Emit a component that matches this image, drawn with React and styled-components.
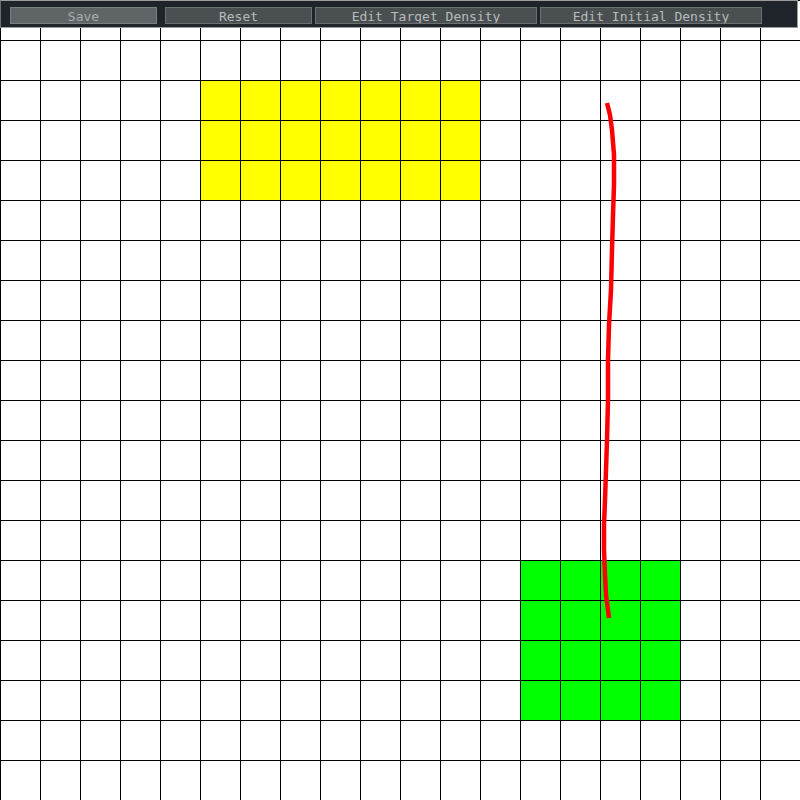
import React from "react";
import styled, { createGlobalStyle } from "styled-components";

const Global = createGlobalStyle`
  html, body { margin: 0; padding: 0; background: #ffffff; }
  body { width: 800px; height: 800px; overflow: hidden; }
`;

const Stage = styled.div`
  position: relative;
  width: 800px;
  height: 800px;
  background: #ffffff;
`;

const Canvas = styled.svg`
  display: block;
  width: 800px;
  height: 800px;
`;

const Toolbar = styled.div`
  position: absolute;
  left: 0;
  top: 0;
  width: 798px;
  height: 28px;
  box-sizing: border-box;
  background: #1f242b;
  border: 1px solid #9c9c9c;
  border-left-color: #6e6e6e;
  display: flex;
  align-items: flex-start;
  padding: 6px 0 0 9px;
`;

const Button = styled.button`
  box-sizing: border-box;
  width: ${(p) => p.$w}px;
  height: 17px;
  margin-right: ${(p) => p.$gap}px;
  padding: 0;
  border: 1px solid ${(p) => (p.$active ? "#7a8081" : "#6a6f71")};
  background: ${(p) => (p.$active ? "#5f6566" : "#4a4f52")};
  color: ${(p) => (p.$active ? "#a6acad" : "#b8bcbd")};
  font-family: "DejaVu Sans Mono", "Liberation Mono", monospace;
  font-size: 13px;
  line-height: 14px;
  overflow: hidden;
  white-space: nowrap;
  text-align: center;
  cursor: pointer;
`;

const Label = styled.span`
  display: block;
  box-sizing: border-box;
  height: 15px;
  overflow: hidden;
  padding-top: 2px;
`;

const gridLines = [];
for (let i = 0; i <= 20; i++) {
  const p = i * 40 + 0.5;
  gridLines.push(<line key={"v" + i} x1={p} y1={0} x2={p} y2={800} />);
  gridLines.push(<line key={"h" + i} x1={0} y1={p} x2={800} y2={p} />);
}

const stroke = [
  [607, 103], [610, 115], [612, 130], [614, 155], [614, 185], [613, 215],
  [612, 250], [611, 290], [609, 325], [608, 360], [608, 400], [607, 440],
  [606, 470], [605, 500], [604, 525], [604, 550], [605, 575], [606, 595],
  [608, 610], [609, 618],
];

export default function App() {
  return (
    <>
      <Global />
      <Stage>
        <Canvas viewBox="0 0 800 800" xmlns="http://www.w3.org/2000/svg">
          <rect x="200" y="80" width="280" height="120" fill="#ffff00" />
          <rect x="520" y="560" width="160" height="160" fill="#00ff00" />
          <g stroke="#000000" strokeWidth="1" shapeRendering="crispEdges">
            {gridLines}
          </g>
          <polyline
            points={stroke.map((p) => p.join(",")).join(" ")}
            fill="none"
            stroke="#ff0000"
            strokeWidth="4.5"
            strokeLinejoin="round"
          />
        </Canvas>
        <Toolbar>
          <Button $w={147} $gap={8} $active>
            <Label>Save</Label>
          </Button>
          <Button $w={147} $gap={3}>
            <Label>Reset</Label>
          </Button>
          <Button $w={222} $gap={3}>
            <Label>Edit Target Density</Label>
          </Button>
          <Button $w={222} $gap={0}>
            <Label>Edit Initial Density</Label>
          </Button>
        </Toolbar>
      </Stage>
    </>
  );
}
